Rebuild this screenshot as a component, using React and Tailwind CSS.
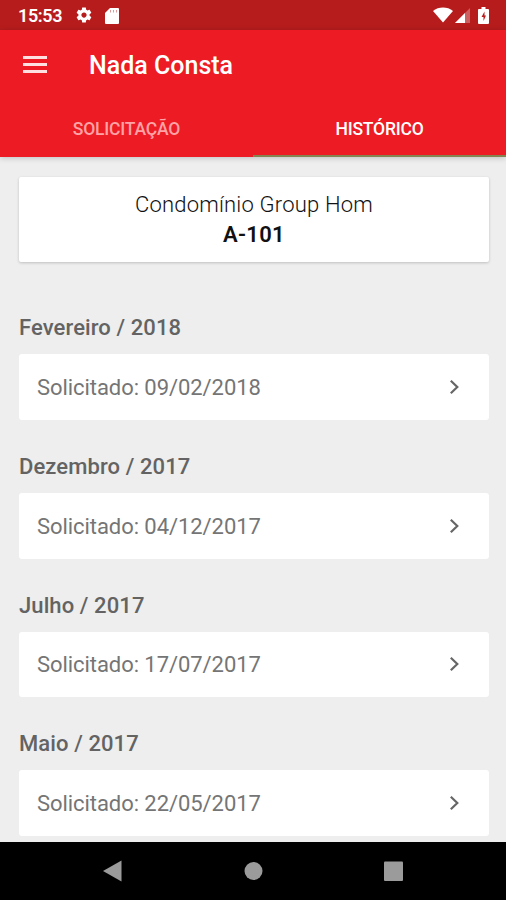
const months = [
  { label: 'Fevereiro / 2018', date: '09/02/2018' },
  { label: 'Dezembro / 2017', date: '04/12/2017' },
  { label: 'Julho / 2017', date: '17/07/2017' },
  { label: 'Maio / 2017', date: '22/05/2017' },
];

const GearIcon = () => (
  <svg viewBox="0 0 24 24" className="h-[18px] w-[18px]" fill="currentColor">
    <path d="M19.43 12.98c.04-.32.07-.64.07-.98s-.03-.66-.07-.98l2.11-1.65c.19-.15.24-.42.12-.64l-2-3.46c-.12-.22-.39-.3-.61-.22l-2.49 1c-.52-.4-1.08-.73-1.69-.98l-.38-2.65C14.46 2.18 14.25 2 14 2h-4c-.25 0-.46.18-.49.42l-.38 2.65c-.61.25-1.17.59-1.69.98l-2.49-1c-.23-.09-.49 0-.61.22l-2 3.46c-.13.22-.07.49.12.64l2.11 1.65c-.04.32-.07.65-.07.98s.03.66.07.98l-2.11 1.65c-.19.15-.24.42-.12.64l2 3.46c.12.22.39.3.61.22l2.49-1c.52.4 1.08.73 1.69.98l.38 2.65c.03.24.24.42.49.42h4c.25 0 .46-.18.49-.42l.38-2.65c.61-.25 1.17-.59 1.69-.98l2.49 1c.23.09.49 0 .61-.22l2-3.46c.12-.22.07-.49-.12-.64l-2.11-1.65zM12 15.5c-1.93 0-3.5-1.57-3.5-3.5s1.57-3.5 3.5-3.5 3.5 1.57 3.5 3.5-1.57 3.5-3.5 3.5z" />
  </svg>
);

const SdCardIcon = () => (
  <svg viewBox="0 0 14 16" className="h-4 w-3.5">
    <path d="M5 0h8q1 0 1 1v14q0 1-1 1H1q-1 0-1-1V5z" fill="#fff" />
    <path d="M5.500 2v2.500M8.500 2v2.500M11.500 2v2.500" stroke="#b71c1c" strokeOpacity="0.45" />
  </svg>
);

const StatusBar = () => (
  <div className="flex h-[30px] items-center bg-[#b71c1c] pl-[18px] pr-3 text-white">
    <span className="w-[57px] pt-0.5 text-[18px] font-semibold leading-none tracking-[-0.4px]">15:53</span>
    <GearIcon />
    <div className="ml-3 pt-px">
      <SdCardIcon />
    </div>
    <div className="ml-auto flex items-center">
      <svg viewBox="0 0 20 16" className="h-4 w-5" fill="currentColor">
        <path d="M0 4C5.500-.6 14.500-.6 20 4L10 15.500z" />
      </svg>
      <svg viewBox="0 0 15 15" className="ml-0.5 h-[15px] w-[15px]" fill="currentColor">
        <path d="M15 0v15H0z" opacity="0.3" />
        <path d="M10 5v10H0z" />
      </svg>
      <svg viewBox="0 0 11 17" className="ml-[8px] mr-[5px] h-[17px] w-[11px]">
        <path d="M3.500 0h4v2H10q1 0 1 1v13q0 1-1 1H1q-1 0-1-1V3q0-1 1-1h2.500z" fill="#fff" />
        <path d="M6.500 4.500L3.500 10h2v4L8 8.500H6.500z" fill="#b71c1c" />
      </svg>
    </div>
  </div>
);

const Header = () => (
  <header className="relative z-10 bg-[#ed1c24] text-white shadow-[0_1px_6px_rgba(0,0,0,0.2)]">
    <div className="flex h-[71px] items-center pl-[23px]">
      <div className="mb-[3px] flex w-[66px] flex-col gap-1 text-[#ffe0e0]">
        <span className="h-[3px] w-6 bg-current" />
        <span className="h-[3px] w-6 bg-current" />
        <span className="h-[3px] w-6 bg-current" />
      </div>
      <h1 className="text-[25px] font-medium leading-none">Nada Consta</h1>
    </div>
    <nav className="grid h-14 grid-cols-2 text-center text-[17.500px] font-medium leading-[56px] tracking-[-0.2px]">
      <span className="h-14 text-[#ffa3a6]">SOLICITAÇÃO</span>
      <span className="h-14 border-b-2 border-[#848450]">HISTÓRICO</span>
    </nav>
  </header>
);

const MonthGroup = ({ label, date }) => (
  <section>
    <h2 className="mb-[12px] text-[22px] font-medium leading-7 tracking-[0.1px] text-[#636363]">{label}</h2>
    <div className="flex h-[65.750px] items-center justify-between rounded-[3px] bg-white pl-[18px] pr-[28px] text-[#757575]">
      <span className="pt-0.5 text-[22px] leading-none tracking-[-0.060px]">Solicitado: {date}</span>
      <svg viewBox="0 0 12 16" className="h-4 w-3" fill="none" stroke="#666" strokeWidth="2.200">
        <path d="M1.800 1.800L8.300 8l-6.500 6.200" />
      </svg>
    </div>
  </section>
);

const NavigationBar = () => (
  <div className="relative z-10 flex h-[58px] items-center bg-black text-[#9b9b9b]">
    <svg viewBox="0 0 506 58" className="h-[58px] w-full" fill="currentColor">
      <path d="M103 29L121.500 18.500v21z" />
      <circle cx="253.500" cy="29" r="9" />
      <rect x="384" y="19.500" width="19" height="19.500" rx="1" />
    </svg>
  </div>
);

export default function App() {
  return (
    <div className="flex h-[900px] w-[506px] flex-col overflow-hidden bg-[#eee] font-[Roboto,sans-serif]">
      <StatusBar />
      <Header />
      <main className="min-h-0 flex-1 overflow-hidden pl-[19px] pr-[17px] pt-[20px]">
        <div className="h-[85px] rounded-[2px] bg-white pt-[13px] text-center text-[22px] leading-[30px] text-[#111] shadow-[0_1px_3px_rgba(0,0,0,0.2)]">
          <p className="font-light tracking-[0.2px]">Condomínio Group Hom</p>
          <p className="font-semibold tracking-[0.3px]">A-101</p>
        </div>
        <div className="mt-[52px] flex flex-col gap-[33px]">
          {months.map((month) => (
            <MonthGroup key={month.date} {...month} />
          ))}
        </div>
      </main>
      <NavigationBar />
    </div>
  );
}
